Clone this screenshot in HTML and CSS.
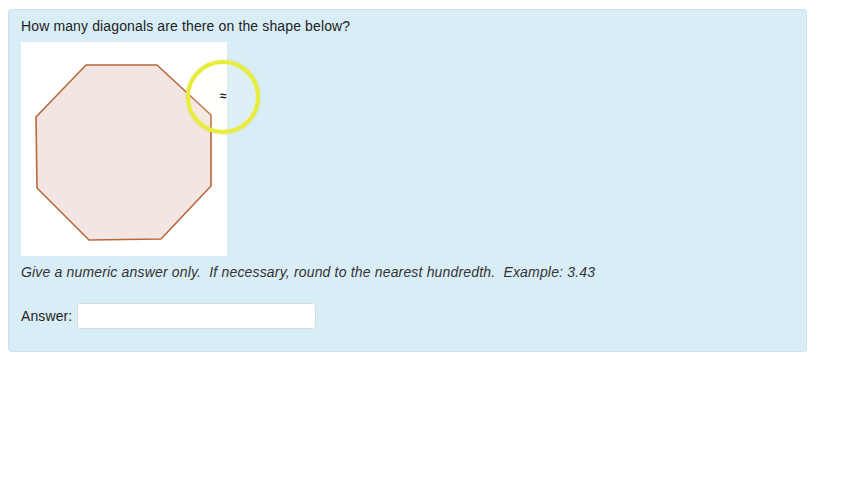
FILE: index.html
```html
<!DOCTYPE html>
<html>
<head>
<meta charset="utf-8">
<link rel="stylesheet" href="styles.css">
</head>
<body>
<div class="panel">
  <p class="question">How many diagonals are there on the shape below?</p>
  <div class="figure">
    <svg class="shape" width="206" height="214" viewBox="0 0 206 214">
      <polygon points="65,23 136,23 190,73 190,144 140,197 68,198 16,146 15,75" fill="#f3e5e1" stroke="#b8683e" stroke-width="1.6" stroke-linejoin="round"/>
    </svg>
    <div class="highlight"></div>
    <span class="cursor">≈</span>
  </div>
  <p class="hint">Give a numeric answer only.&nbsp; If necessary, round to the nearest hundredth.&nbsp; Example: 3.43</p>
  <div class="answer-row">
    <label class="answer-label">Answer:</label>
    <input class="answer-input" type="text">
  </div>
</div>
</body>
</html>
```
FILE: styles.css
```css
body {
  margin: 9px 8px;
  font-family: "Liberation Sans", Arial, sans-serif;
  font-size: 14px;
  color: #333;
  background: #fff;
}
.panel {
  background: #d9edf7;
  border: 1px solid #c9e3ee;
  border-radius: 3px;
  padding: 6px 12px 22px 12px;
  box-sizing: border-box;
  width: 799px;
}
.question {
  margin: 0;
  line-height: 20px;
  color: #222;
  letter-spacing: 0.13px;
}
.figure {
  position: relative;
  margin-top: 6px;
  width: 206px;
  height: 214px;
  background: #fff;
}
.shape {
  display: block;
}
.highlight {
  position: absolute;
  left: 165px;
  top: 18px;
  width: 66px;
  height: 66px;
  border: 4px solid #e8ec3a;
  border-radius: 50%;
  box-shadow: 0 0 2px rgba(200, 200, 40, 0.6);
  background: rgba(255, 255, 220, 0.12);
}
.cursor {
  position: absolute;
  left: 199px;
  top: 48px;
  font-size: 12px;
  font-weight: bold;
  line-height: 12px;
  color: #111;
}
.hint {
  margin: 6px 0 0 0;
  line-height: 20px;
  font-style: italic;
  color: #333;
  letter-spacing: 0.17px;
}
.answer-row {
  display: flex;
  align-items: center;
  gap: 5px;
  margin-top: 21px;
}
.answer-label {
  color: #222;
  letter-spacing: 0.1px;
}
.answer-input {
  width: 239px;
  height: 26px;
  box-sizing: border-box;
  border: 1px solid #d5dde2;
  border-radius: 3px;
  background: #fff;
  margin: 0;
  padding: 2px 6px;
}
```
